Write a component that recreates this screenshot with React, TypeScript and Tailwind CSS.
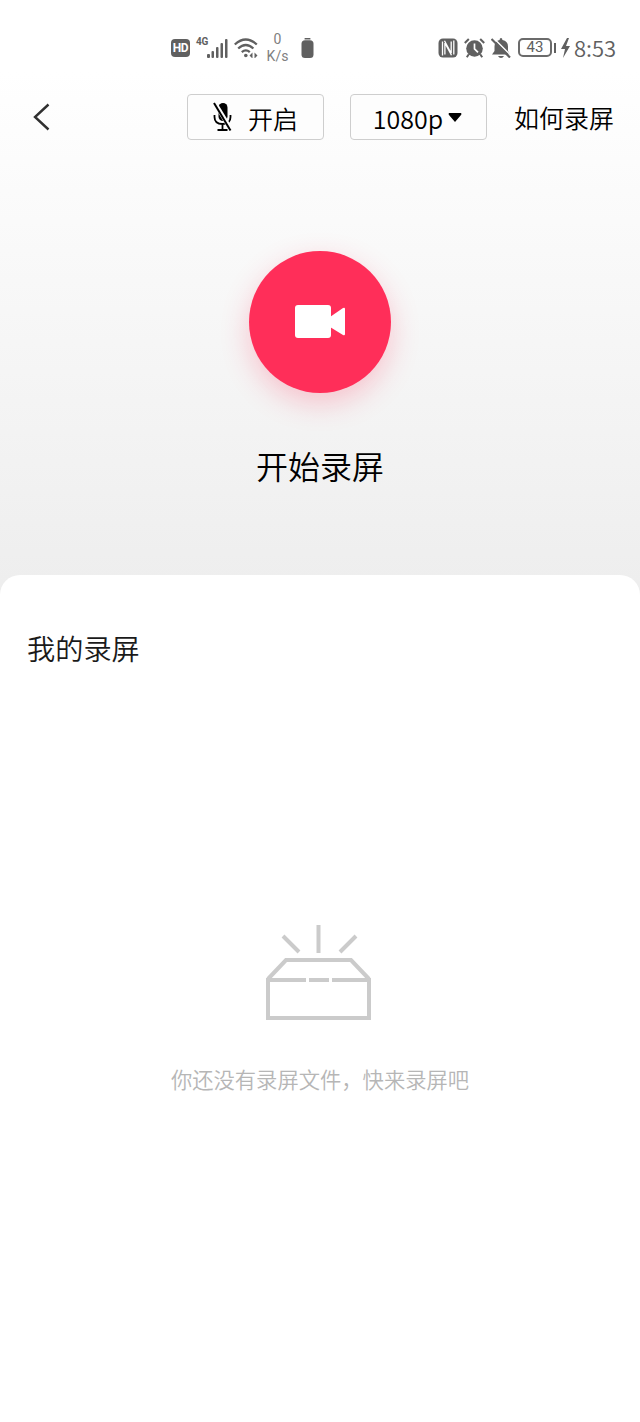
import React from "react";

const App = () => {
  return (
    <div className="flex h-[1422px] w-[640px] flex-col overflow-hidden bg-linear-to-b from-white from-[5%] to-[#eeeeee] to-[41%] font-['Noto_Sans_CJK_SC',sans-serif] font-[350] text-black">
      <StatusBar />
      <Header />
      <Recorder />
      <Recordings />
    </div>
  );
};

export default App;

const StatusBar = () => (
  <div className="flex h-[93px] shrink-0 justify-between pl-[171px] pr-[24px] text-[#606060]">
    <div className="flex h-[95px] items-center">
      <div className="flex h-[18px] w-[19px] items-center justify-center rounded-[4px] bg-[#606060] font-['Roboto',sans-serif] text-[12px] font-bold leading-none tracking-[-0.3px] text-white">
        HD
      </div>
      <div className="mb-[11px] ml-[6px] w-[12px] font-['Roboto',sans-serif] text-[10px] font-bold leading-none tracking-[-0.3px]">
        4G
      </div>
      <SignalIcon />
      <WifiIcon />
      <div className="ml-[5px] flex w-[27px] flex-col items-center font-['Roboto',sans-serif] text-[14px] font-normal leading-[17px] text-[#808080]">
        <span>0</span>
        <span>K/s</span>
      </div>
      <BatteryIcon />
    </div>
    <div className="flex h-[95px] items-center">
      <NfcIcon />
      <AlarmIcon />
      <BellOffIcon />
      <div className="ml-[7px] flex h-[19px] w-[34px] items-center justify-center rounded-[5px] border-2 border-[#6b6b6b] font-['Roboto',sans-serif] text-[15px] font-normal leading-none">
        43
      </div>
      <div className="ml-[2px] h-[10px] w-[2px] bg-[#606060]" />
      <svg className="ml-[5px]" width="9" height="20" viewBox="0 0 9 20">
        <path d="M6 0 0 11h4L2 20l7-12H5l3-8Z" fill="currentColor" />
      </svg>
      <div className="mb-[2px] ml-[4px] w-[42px] whitespace-nowrap text-[22px] leading-none">
        8:53
      </div>
    </div>
  </div>
);

const Header = () => (
  <div className="flex h-[48px] shrink-0 items-center pl-[33px]">
    <svg width="17" height="28" viewBox="0 0 17 28" fill="none">
      <path d="M15.5 1.5 2 14l13.5 12.5" stroke="#303030" strokeWidth="2.4" />
    </svg>
    <button className="ml-[137px] flex h-[46px] w-[137px] items-center rounded-[4px] border border-[#cecece] bg-[#fdfdfd] pl-[25px] text-[25px] leading-none">
      <MicOffIcon />
      <span className="ml-[15px] mt-[2px]">开启</span>
    </button>
    <button className="ml-[26px] flex h-[46px] w-[137px] items-center rounded-[4px] border border-[#cecece] bg-[#fdfdfd] pl-[21px] text-[25px] leading-none">
      <span className="mt-[2px] w-[72px]">1080p</span>
      <svg className="ml-[4px]" width="14" height="9" viewBox="0 0 14 9">
        <path d="M1 0h12q1 1 0 2L7 9 1 2Q0 1 1 0Z" fill="currentColor" />
      </svg>
    </button>
    <span className="ml-[27px] whitespace-nowrap text-[25px] leading-none">
      如何录屏
    </span>
  </div>
);

const Recorder = () => (
  <div className="flex h-[434px] shrink-0 flex-col items-center pt-[110px]">
    <button className="flex size-[142px] items-center justify-center rounded-full bg-[#ff2e59] shadow-[0_10px_28px_rgba(255,46,89,0.25)]">
      <svg className="-mt-px" width="50" height="33" viewBox="0 0 50 33" fill="white">
        <rect width="36" height="33" rx="3" />
        <path d="M35 12 48 3q2-1 2 1v25q0 2-2 1L35 22Z" />
      </svg>
    </button>
    <div className="mt-[54px] text-[32px] leading-[36px]">开始录屏</div>
  </div>
);

const Recordings = () => (
  <div className="flex grow flex-col rounded-t-[20px] bg-white">
    <h2 className="pl-[27px] pt-[57px] text-[28.2px] leading-[32px] text-[#1a1a1a]">
      我的录屏
    </h2>
    <div className="mt-[261px] flex flex-col items-center">
      <EmptyBox />
      <p className="mt-[46px] text-[21.3px] leading-[26px] text-[#b6b6b6]">
        你还没有录屏文件，快来录屏吧
      </p>
    </div>
  </div>
);

const SignalIcon = () => (
  <svg className="-ml-px" width="21" height="20" viewBox="0 0 21 20" fill="currentColor">
    <rect x="0" y="16" width="3" height="4" rx="1" />
    <rect x="4.5" y="13" width="2.5" height="7" rx="1" />
    <rect x="9" y="9" width="2.5" height="11" rx="1" />
    <rect x="13.5" y="5" width="2.5" height="15" rx="1" />
    <rect x="18" y="1" width="2.5" height="19" rx="1" />
  </svg>
);

const WifiIcon = () => (
  <svg className="ml-[6px]" width="25" height="20" viewBox="0 0 25 20" fill="none" stroke="currentColor" strokeWidth="2.3">
    <path d="M.8 6.5q11-10 22 0M4.2 10.5q7.6-7 15.2 0M7.8 14.2q4-3.6 8 0" />
    <circle cx="11.8" cy="17.5" r="1.8" fill="currentColor" stroke="none" />
    <path d="m18.5 14.5-3 3 3 3v-6Zm2 0 3 3-3 3v-6Z" fill="currentColor" stroke="none" />
  </svg>
);

const BatteryIcon = () => (
  <svg className="ml-[10px]" width="13" height="20" viewBox="0 0 13 20" fill="currentColor">
    <rect x="3.5" y="0" width="6" height="1.5" rx=".6" />
    <rect x=".5" y="2.2" width="12" height="17.8" rx="3.5" />
  </svg>
);

const NfcIcon = () => (
  <svg width="20" height="20" viewBox="0 0 20 20" fill="none">
    <rect x=".5" y=".5" width="19" height="19" rx="4.5" fill="currentColor" />
    <path d="M4.5 3.5v14M6.5 2.8l6.7 12.5V3.5M15.8 2.500v14M13.500 17.300 6.900 5v11.500" stroke="white" strokeWidth="1.3" />
  </svg>
);

const AlarmIcon = () => (
  <svg className="ml-[6px]" width="21" height="20" viewBox="0 0 21 20" fill="none">
    <circle cx="10.5" cy="10.5" r="8.3" fill="currentColor" />
    <path d="m.8 5 4-4M20.2 5l-4-4M4.8 16.2l-2 3M16.2 16.2l2 3" stroke="currentColor" strokeWidth="2" />
    <path d="M10.5 5.5v5.300l3.500 3.500" stroke="white" strokeWidth="1.7" />
  </svg>
);

const BellOffIcon = () => (
  <svg className="ml-[6px]" width="20" height="20" viewBox="0 0 20 20" fill="none">
    <path d="M10 0q1.400 0 1.400 2Q17 3 17 8.500V13l2 3.500H1L3.500 13V8.500q0-5.500 5.100-6.500Q8.600 0 10 0ZM7 18h6q-1 2-3 2t-3-2Z" fill="currentColor" />
    <path d="m2-.5 18 18" stroke="white" strokeWidth="1.4" />
    <path d="m.5 1 18.500 18.500" stroke="currentColor" strokeWidth="2.2" />
  </svg>
);

const MicOffIcon = () => (
  <svg width="20" height="30" viewBox="0 0 20 30" fill="none">
    <rect x="5.5" y="1" width="9" height="18" rx="4.5" fill="currentColor" />
    <path d="M1.500 13v2q0 7 8 7t8-7v-2M9.500 22v5.500M4.500 28h10" stroke="currentColor" strokeWidth="1.8" />
    <path d="m1.800 1 16.500 27" stroke="#fdfdfd" strokeWidth="4.4" />
    <path d="m1 1 16.500 27.500" stroke="currentColor" strokeWidth="2" />
  </svg>
);

const EmptyBox = () => (
  <svg className="mr-[3px]" width="105" height="95" viewBox="0 0 105 95" fill="none" stroke="#cbcbcb" strokeWidth="4">
    <path d="M52.5 0v28M17 11l16 16M90 11 74 27" />
    <path d="M2 54 20 35h65l18 19M2 53v40h101V53" />
    <path d="M2 55h38M43 55h20M66 55h37" />
  </svg>
);
